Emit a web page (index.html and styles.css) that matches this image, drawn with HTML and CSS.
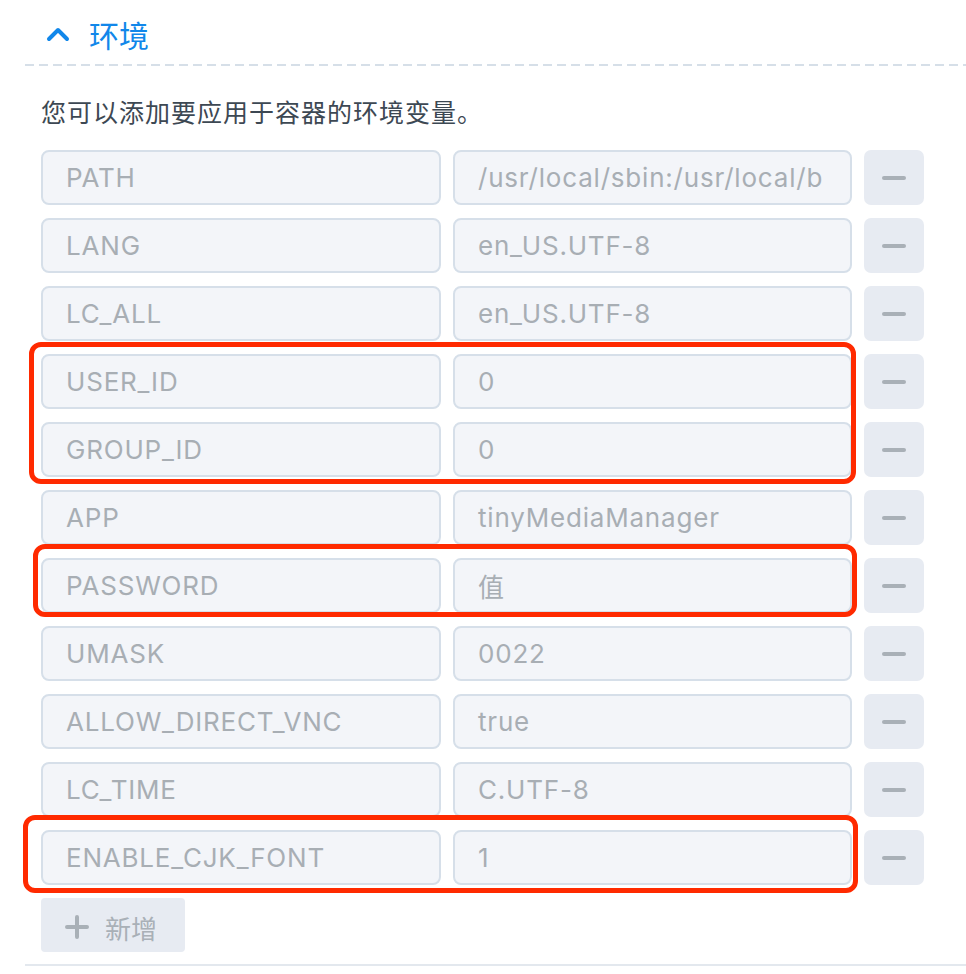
FILE: index.html
```html
<!DOCTYPE html>
<html lang="zh-CN">
<head>
<meta charset="utf-8">
<title>环境</title>
<link rel="stylesheet" href="styles.css">
</head>
<body>
<div class="panel">
  <div class="section-head">
    <svg class="chevron" width="24" height="16" viewBox="0 0 24 16"><polyline points="3,13 12,4 21,13" fill="none" stroke="#1187ea" stroke-width="4" stroke-linecap="round" stroke-linejoin="round"/></svg>
    <span class="title">环境</span>
  </div>
  <div class="divider-dashed"></div>
  <div class="section-body">
    <p class="desc">您可以添加要应用于容器的环境变量。</p>
    <div class="env-grid">
      <div class="field">PATH</div><div class="field">/usr/local/sbin:/usr/local/b</div><div class="minus-btn"><span class="bar"></span></div>
      <div class="field">LANG</div><div class="field">en_US.UTF-8</div><div class="minus-btn"><span class="bar"></span></div>
      <div class="field">LC_ALL</div><div class="field">en_US.UTF-8</div><div class="minus-btn"><span class="bar"></span></div>
      <div class="field">USER_ID</div><div class="field">0</div><div class="minus-btn"><span class="bar"></span></div>
      <div class="field">GROUP_ID</div><div class="field">0</div><div class="minus-btn"><span class="bar"></span></div>
      <div class="field">APP</div><div class="field">tinyMediaManager</div><div class="minus-btn"><span class="bar"></span></div>
      <div class="field">PASSWORD</div><div class="field">值</div><div class="minus-btn"><span class="bar"></span></div>
      <div class="field">UMASK</div><div class="field">0022</div><div class="minus-btn"><span class="bar"></span></div>
      <div class="field">ALLOW_DIRECT_VNC</div><div class="field">true</div><div class="minus-btn"><span class="bar"></span></div>
      <div class="field">LC_TIME</div><div class="field">C.UTF-8</div><div class="minus-btn"><span class="bar"></span></div>
      <div class="field">ENABLE_CJK_FONT</div><div class="field">1</div><div class="minus-btn"><span class="bar"></span></div>
    </div>
    <div class="add-btn">
      <svg class="plus" width="24" height="24" viewBox="0 0 24 24"><path d="M12 2v20M2 12h20" stroke="#a9b0b7" stroke-width="4" stroke-linecap="round"/></svg>
      <span>新增</span>
    </div>
  </div>
  <div class="divider-solid"></div>
  <div class="mark mark-1"></div>
  <div class="mark mark-2"></div>
  <div class="mark mark-3"></div>
</div>
</body>
</html>
```
FILE: styles.css
```css
html, body {
  margin: 0;
  padding: 0;
  background: #ffffff;
}
body {
  font-family: "Inter", "Noto Sans CJK SC", sans-serif;
  width: 966px;
  height: 974px;
  overflow: hidden;
}
.panel {
  position: relative;
  padding-left: 25px;
}
.section-head {
  height: 64px;
  display: flex;
  align-items: center;
  padding-left: 21px;
  padding-top: 4px;
  box-sizing: border-box;
}
.chevron {
  display: block;
  margin-right: 19px;
}
.title {
  font-family: "Noto Sans CJK SC", sans-serif;
  font-size: 30px;
  color: #1187ea;
  line-height: 40px;
}
.divider-dashed {
  height: 2px;
  background-image: linear-gradient(to right, #d6dfe8 9px, transparent 9px);
  background-size: 14px 2px;
  background-repeat: repeat-x;
}
.section-body {
  padding-left: 16px;
}
.desc {
  margin: 27px 0 21px;
  font-family: "Noto Sans CJK SC", sans-serif;
  font-size: 25px;
  letter-spacing: 1px;
  line-height: 36px;
  color: #3d4853;
}
.env-grid {
  display: grid;
  grid-template-columns: 400px 399px 60px;
  grid-auto-rows: 55px;
  column-gap: 12px;
  row-gap: 13px;
}
.field {
  box-sizing: border-box;
  background: #f3f5f9;
  border: 2px solid #d6dfe9;
  border-radius: 8px;
  padding-left: 23px;
  display: flex;
  align-items: center;
  font-size: 26px;
  letter-spacing: 0.8px;
  color: #a8aeb4;
  white-space: nowrap;
  overflow: hidden;
}
.minus-btn {
  background: #e7ebf2;
  border-radius: 7px;
  display: flex;
  align-items: center;
  justify-content: center;
}
.bar {
  width: 24px;
  height: 4px;
  border-radius: 2px;
  background: #a9b0b7;
}
.add-btn {
  margin-top: 13px;
  width: 144px;
  height: 54px;
  box-sizing: border-box;
  background: #e7ebf2;
  border-radius: 4px;
  display: flex;
  align-items: center;
  padding-left: 24px;
  padding-top: 4px;
  gap: 16px;
  font-family: "Noto Sans CJK SC", sans-serif;
  font-size: 26px;
  color: #a9b0b7;
}
.plus {
  display: block;
}
.divider-solid {
  margin-top: 12px;
  height: 2px;
  background: #e3e8ee;
}
.mark {
  position: absolute;
  border: 5px solid #ff2a00;
  border-radius: 12px;
  box-sizing: border-box;
}
.mark-1 { left: 29px; top: 342px; width: 827px; height: 142px; }
.mark-2 { left: 33px; top: 544px; width: 824px; height: 73px; }
.mark-3 { left: 23px; top: 815px; width: 835px; height: 78px; }
```
